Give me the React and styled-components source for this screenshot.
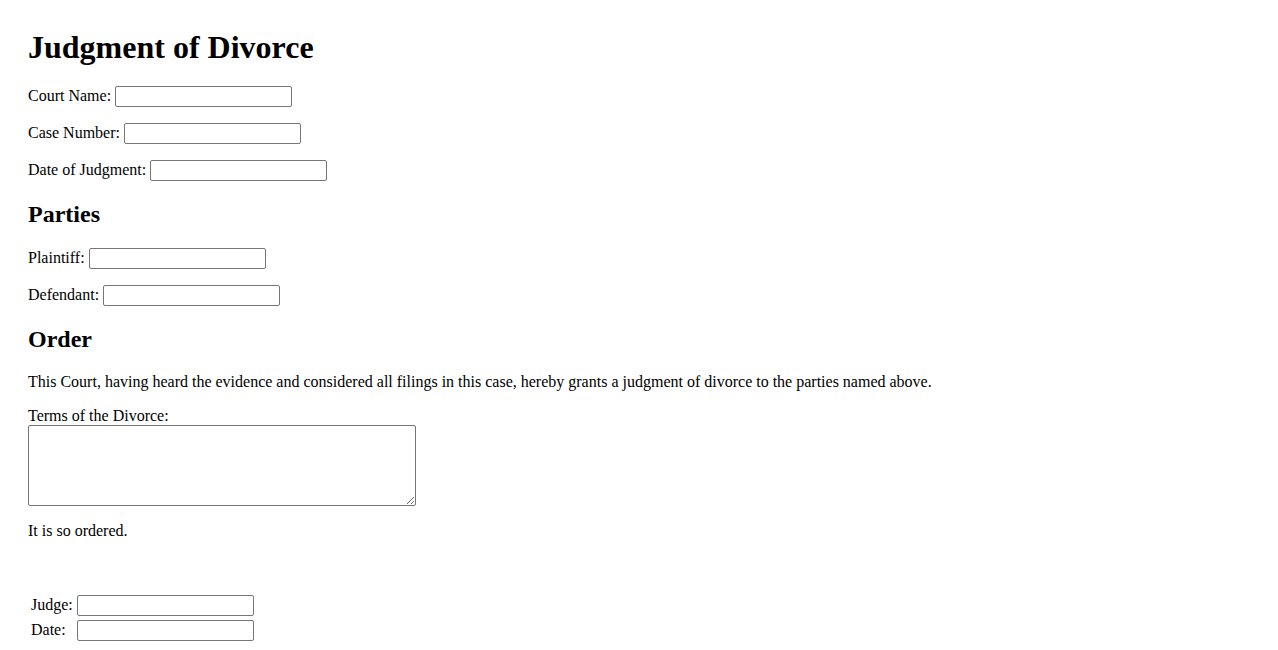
import React from "react";
import styled, { createGlobalStyle } from "styled-components";

const Global = createGlobalStyle`
  html, body { margin: 0; padding: 0; background: #fff; }
  body {
    font-family: "Liberation Serif", "Times New Roman", serif;
    font-size: 16px;
    color: #000;
  }
`;

const Page = styled.main`
  padding: 8px 28px;
`;

const Title = styled.h1`
  font-size: 32px;
  font-weight: bold;
  margin: 21.44px 0 19.44px;
`;

const Section = styled.h2`
  font-size: 24px;
  font-weight: bold;
  margin: 19.92px 0;
`;

const Field = styled.p`
  margin: 16px 0;
`;

const Label = styled.label`
  margin-right: 4px;
`;

const Input = styled.input`
  font-family: Arial, "Liberation Sans", sans-serif;
  font-size: 13.33px;
  width: 177px;
  height: 21px;
  box-sizing: border-box;
  padding: 1px 2px;
  border: 1px solid #767676;
  border-radius: 2px;
  background: #fff;
  vertical-align: baseline;
`;

const Text = styled.p`
  margin: 16px 0;
`;

const AreaLabel = styled.label`
  display: block;
`;

const Area = styled.textarea`
  display: block;
  width: 388px;
  height: 81px;
  box-sizing: border-box;
  border: 1px solid #767676;
  border-radius: 2px;
  padding: 2px;
  font-family: "Liberation Mono", monospace;
  font-size: 13.33px;
`;

const Closing = styled.p`
  margin: 16px 0 52px;
`;

const SignTable = styled.table`
  border-spacing: 2px;
  margin-left: 0;
`;

const Cell = styled.td`
  padding: 1px;
  vertical-align: middle;
`;

export default function App() {
  return (
    <>
      <Global />
      <Page>
        <Title>Judgment of Divorce</Title>
        <Field>
          <Label htmlFor="court">Court Name:</Label>
          <Input id="court" type="text" />
        </Field>
        <Field>
          <Label htmlFor="case">Case Number:</Label>
          <Input id="case" type="text" />
        </Field>
        <Field>
          <Label htmlFor="date">Date of Judgment:</Label>
          <Input id="date" type="text" />
        </Field>

        <Section>Parties</Section>
        <Field>
          <Label htmlFor="plaintiff">Plaintiff:</Label>
          <Input id="plaintiff" type="text" />
        </Field>
        <Field>
          <Label htmlFor="defendant">Defendant:</Label>
          <Input id="defendant" type="text" />
        </Field>

        <Section>Order</Section>
        <Text>
          This Court, having heard the evidence and considered all filings in this case, hereby grants a judgment of divorce to the parties named above.
        </Text>
        <AreaLabel htmlFor="terms">Terms of the Divorce:</AreaLabel>
        <Area id="terms" />
        <Closing>It is so ordered.</Closing>

        <SignTable>
          <tbody>
            <tr>
              <Cell>Judge:</Cell>
              <Cell><Input type="text" /></Cell>
            </tr>
            <tr>
              <Cell>Date:</Cell>
              <Cell><Input type="text" /></Cell>
            </tr>
          </tbody>
        </SignTable>
      </Page>
    </>
  );
}
